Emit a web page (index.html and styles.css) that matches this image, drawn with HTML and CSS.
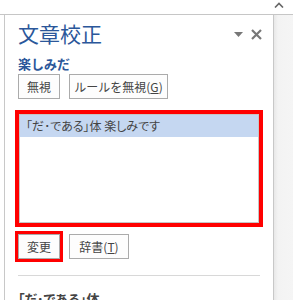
FILE: index.html
```html
<!DOCTYPE html>
<html lang="ja">
<head>
<meta charset="utf-8">
<link rel="stylesheet" href="styles.css">
</head>
<body>
<div class="topbar">
  <svg class="caret" width="10" height="6" viewBox="0 0 10 6"><path d="M1 5.5 L5 1.5 L9 5.5" fill="none" stroke="#666" stroke-width="1.6"/></svg>
</div>
<div class="main">
  <div class="gutter"></div>
  <div class="panel">
    <div class="titlerow">
      <div class="title">文章校正</div>
      <div class="icons">
        <svg class="drop" width="9" height="5" viewBox="0 0 9 5"><path d="M0 0 H9 L4.5 5 Z" fill="#777"/></svg>
        <svg class="close" width="11" height="11" viewBox="0 0 11 11"><path d="M1 1 L10 10 M10 1 L1 10" stroke="#777" stroke-width="2.2"/></svg>
      </div>
    </div>
    <div class="word">楽しみだ</div>
    <div class="btnrow">
      <button class="btn w42">無視</button>
      <button class="btn w99">ルールを無視(<u>G</u>)</button>
    </div>
    <div class="listbox">
      <div class="item">「だ･である」体 楽しみです</div>
    </div>
    <div class="btnrow second">
      <button class="btn w42 marked">変更</button>
      <button class="btn w60">辞書(<u>T</u>)</button>
    </div>
    <div class="sep"></div>
    <div class="section">「だ･である」体</div>
  </div>
  <div class="side"></div>
</div>
</body>
</html>
```
FILE: styles.css
```css
html, body {
  margin: 0;
  padding: 0;
  background: #fff;
  font-family: "Noto Sans CJK JP", "Noto Sans", sans-serif;
  overflow: hidden;
}
.topbar {
  height: 14px;
  border-bottom: 1px solid #c6c6c6;
  position: relative;
}
.caret {
  position: absolute;
  left: 274px;
  top: 2px;
}
.main {
  display: flex;
  height: 285px;
}
.gutter {
  width: 4px;
}
.panel {
  border-left: 1px solid #c8c8c8;
  border-right: 1px solid #c8c8c8;
  padding-left: 13px;
  box-sizing: content-box;
  width: 255px;
}
.side {
  flex: 1;
  background: linear-gradient(to right, #e8e8e8 0, #f3f3f3 4px, #f5f5f5 100%);
}
.titlerow {
  display: flex;
  justify-content: space-between;
  align-items: flex-start;
  padding-top: 3px;
  height: 36px;
}
.title {
  font-size: 21px;
  line-height: 30px;
  color: #2b579a;
}
.icons {
  display: flex;
  align-items: center;
  gap: 8px;
  padding-top: 11px;
  padding-right: 11px;
}
.word {
  font-size: 13px;
  font-weight: bold;
  color: #2b579a;
  line-height: 19px;
  height: 20px;
}
.btnrow {
  display: flex;
  gap: 9px;
}
.btn {
  height: 25px;
  border: 1px solid #ababab;
  background: #fdfdfd;
  color: #444;
  font-family: "Noto Sans CJK JP", "Noto Sans", sans-serif;
  font-size: 12px;
  padding: 0;
  line-height: 22px;
  margin: 0;
  text-align: center;
}
.w42 { width: 42px; }
.w60 { width: 60px; }
.w99 { width: 99px; }
.btn u {
  text-decoration: underline;
}
.listbox {
  margin-top: 15px;
  margin-left: 1px;
  width: 238px;
  height: 107px;
  border: 1px solid #c6c6c6;
  outline: 4px solid #ff0000;
}
.item {
  background: #c5d7f1;
  height: 22px;
  line-height: 21px;
  font-size: 12px;
  color: #444;
  padding-left: 6px;
  font-feature-settings: "palt";
}
.second {
  margin-top: 11px;
}
.marked {
  outline: 3px solid #ff0000;
}
.sep {
  margin-top: 16px;
  width: 242px;
  height: 1px;
  background: #d8d8d8;
}
.section {
  margin-top: 14px;
  font-size: 13px;
  font-weight: bold;
  color: #444;
  line-height: 18px;
  font-feature-settings: "palt";
}
```
